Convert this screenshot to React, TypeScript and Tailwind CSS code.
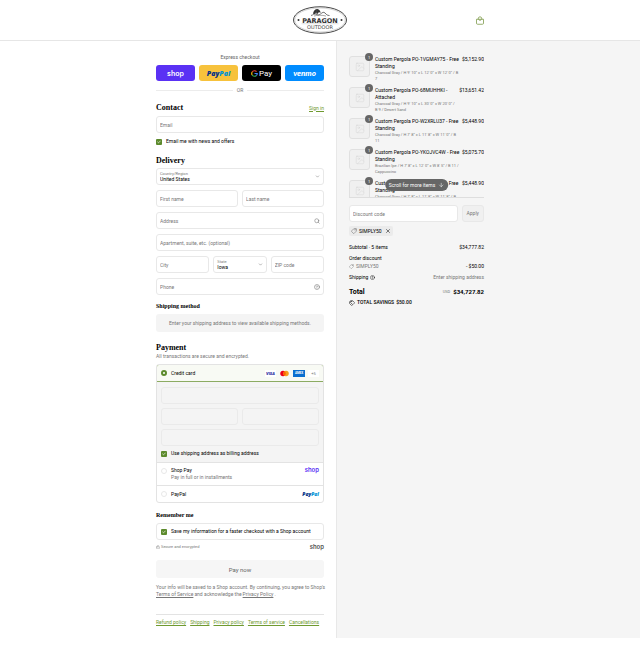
import type { ReactNode } from "react";
import { ArrowDown, Check, ChevronDown, CircleHelp, Image, Lock, Search, Tag, Tags, X } from "lucide-react";

const items = [
  { title: ["Custom Pergola PO-1VGMAY75 - Free", "Standing"], detail: ["Charcoal Gray / H 9' 10\" x L 12' 0\" x W 12' 0\" / B", "7"], price: "$5,152.90" },
  { title: ["Custom Pergola PO-68MUHHKI -", "Attached"], detail: ["Charcoal Gray / H 9' 10\" x L 30' 0\" x W 20' 0\" /", "B 9 / Desert Sand"], price: "$13,651.42" },
  { title: ["Custom Pergola PO-W2XRLU37 - Free", "Standing"], detail: ["Charcoal Gray / H 7' 8\" x L 11' 8\" x W 11' 0\" / B", "11"], price: "$5,448.90" },
  { title: ["Custom Pergola PO-YKOJVC4W - Free", "Standing"], detail: ["Brazilian Ipe / H 7' 8\" x L 12' 0\" x W 8' 5\" / B 11 /", "Cappuccino"], price: "$5,075.70" },
  { title: ["Custom Pergola PO-V8XKLM20 - Free", "Standing"], detail: ["Charcoal Gray / H 7' 8\" x L 11' 8\" x W 11' 8\" / B"], price: "$5,448.90" },
];

const policies = ["Refund policy", "Shipping", "Privacy policy", "Terms of service", "Cancellations"];

const field = "h-[17px] w-full min-w-0 rounded-[3px] border border-[#e8e8e8] bg-white px-[3px] text-[5px] text-black placeholder:text-[#777] outline-none";

function Heading({ children, small }: { children: ReactNode; small?: boolean }) {
  return (
    <h2 className={`font-["Liberation_Serif",serif] font-bold text-black ${small ? "text-[6px] leading-[8px]" : "text-[8px] leading-[10px]"}`}>
      {children}
    </h2>
  );
}

function TextField({ label, icon }: { label: string; icon?: ReactNode }) {
  return (
    <div className="relative min-w-0 flex-1">
      <input className={field} placeholder={label} aria-label={label} />
      {icon && <span className="absolute inset-y-0 right-1 flex items-center text-[#666]">{icon}</span>}
    </div>
  );
}

function SelectField({ id, label, value }: { id: string; label: string; value: string }) {
  return (
    <div className="relative min-w-0 flex-1">
      <label htmlFor={id} className="absolute left-1 top-[3px] text-[4px] leading-[5px] text-[#777]">{label}</label>
      <select id={id} className={`${field} appearance-none pt-[6px]`}>
        <option>{value}</option>
      </select>
      <span className="pointer-events-none absolute inset-y-0 right-1 flex items-center text-[#555]">
        <ChevronDown size={5} />
      </span>
    </div>
  );
}

function CheckField({ label }: { label: string }) {
  return (
    <label className="flex items-center gap-1 text-black">
      <span className="relative flex size-[6px] shrink-0">
        <input type="checkbox" defaultChecked className="size-[6px] appearance-none rounded-[1px] bg-[#5c8a2c]" />
        <Check size={4} strokeWidth={4} className="pointer-events-none absolute left-px top-px text-white" />
      </span>
      {label}
    </label>
  );
}

function ShopMark({ className }: { className: string }) {
  return <span className={`font-["Inter",sans-serif] font-semibold ${className}`}>shop</span>;
}

function PayPalMark({ className }: { className: string }) {
  return (
    <span className={`font-["Open_Sans",sans-serif] font-extrabold italic ${className}`}>
      <span className="text-[#003087]">Pay</span>
      <span className="text-[#0093d6]">Pal</span>
    </span>
  );
}

function GoogleG() {
  return (
    <svg viewBox="0 0 24 24" className="size-[7px]" fill="none" strokeWidth="4">
      <path d="M19 5.5A9.5 9.5 0 0 0 4 7" stroke="#ea4335" />
      <path d="M4 7a9.5 9.5 0 0 0 0 10" stroke="#fbbc04" />
      <path d="M4 17a9.5 9.5 0 0 0 14.500 2" stroke="#34a853" />
      <path d="M18.500 19a9.500 9.500 0 0 0 3-7H12" stroke="#4285f4" />
    </svg>
  );
}

function Logo() {
  return (
    <svg viewBox="0 0 108 56" className="h-[28px] w-[54px]" role="img" aria-label="Paragon Outdoor">
      <ellipse cx="54" cy="28" rx="53" ry="26.500" fill="white" stroke="#333" strokeWidth="1.800" />
      <ellipse cx="54" cy="28" rx="50.500" ry="24" fill="none" stroke="#777" strokeWidth="0.600" />
      <path d="M40 15c1-5 4-9 9-9 5 1 6 5 6 8l-3-2-3 4-3-3-3 4z" fill="#333" />
      <path d="M36 19c5-1 6-5 10-3s5 3 9 0 6-5 9-2 4 5 9 5" fill="none" stroke="#444" strokeWidth="1.500" />
      <path d="M48 8l-2 10M42 20c7-2 16-2 24 0" fill="none" stroke="#555" />
      <circle cx="11" cy="28" r="2" fill="#333" />
      <circle cx="97" cy="28" r="2" fill="#333" />
      <text x="54" y="33" textAnchor="middle" fontFamily="DejaVu Sans" fontWeight="bold" fontSize="13" fill="#333">PARAGON</text>
      <text x="54" y="46" textAnchor="middle" fontFamily="DejaVu Sans" fontSize="10" fill="#444">OUTDOOR</text>
      <path d="M17 35.500h74" stroke="#999" strokeWidth="0.600" />
    </svg>
  );
}

function CartIcon() {
  return (
    <svg viewBox="0 0 16 18" className="h-[9px] w-2" fill="none" stroke="#7d9b4a" strokeWidth="1.600" strokeLinejoin="round">
      <path d="M1 6.500h14v8q0 2-2 2H3q-2 0-2-2z" />
      <path d="M4 6.500q.500-5 4-5t4 5M5.500 6.500c0 3 5 3 5 0" />
    </svg>
  );
}

function Payment() {
  return (
    <div className="mt-1 overflow-hidden rounded-[3px] border border-[#e3e3e3]">
      <div className="-mx-px -mt-px flex h-[18px] items-center rounded-t-[3px] border border-[#8cab62] bg-[#f8faf4] px-1">
        <label className="flex flex-1 items-center gap-1">
          <input type="radio" name="method" defaultChecked className="size-[6px] appearance-none rounded-full border-2 border-[#5c8a2c] bg-white" />
          Credit card
        </label>
        <div className="flex items-center gap-[3px]">
          <span className="flex h-[7px] w-[11px] items-center justify-center bg-white text-[4px] font-black italic text-[#1a1f9c]">VISA</span>
          <svg viewBox="0 0 22 14" className="h-[7px] w-[11px]">
            <circle cx="8" cy="7" r="5.500" fill="#eb001b" />
            <circle cx="14" cy="7" r="5.500" fill="#f79e1b" />
            <path d="M11 2.400a5.500 5.500 0 0 1 0 9.200 5.500 5.500 0 0 1 0-9.200" fill="#ff5f00" />
          </svg>
          <span className="flex h-[7px] w-3 items-center justify-center bg-[#0b6fd0] text-[3px] font-bold text-white">AMEX</span>
          <span className="flex h-[7px] w-[11px] items-center justify-center bg-white text-[4px] text-[#777]">+5</span>
        </div>
      </div>
      <div className="flex flex-col gap-1 bg-[#f4f4f4] px-1 py-[5px]">
        <input aria-label="Card number" className="h-[17px] rounded-[3px] border border-[#eaeaea]" />
        <div className="flex gap-1">
          <input aria-label="Expiration date" className="h-[17px] min-w-0 flex-1 rounded-[3px] border border-[#eaeaea]" />
          <input aria-label="Security code" className="h-[17px] min-w-0 flex-1 rounded-[3px] border border-[#eaeaea]" />
        </div>
        <input aria-label="Name on card" className="h-[17px] rounded-[3px] border border-[#eaeaea]" />
        <CheckField label="Use shipping address as billing address" />
      </div>
      <div className="flex h-[23px] items-start border-t border-[#e3e3e3] px-1 pt-1">
        <label className="flex flex-1 items-start gap-1">
          <input type="radio" name="method" className="mt-px size-[6px] appearance-none rounded-full border border-[#e8e8e8] bg-white" />
          <span>
            Shop Pay
            <span className="block text-[#777]">Pay in full or in installments</span>
          </span>
        </label>
        <ShopMark className="text-[6px] leading-[6px] text-[#5a31f4]" />
      </div>
      <div className="flex h-[17px] items-center border-t border-[#e3e3e3] px-1">
        <label className="flex flex-1 items-center gap-1">
          <input type="radio" name="method" className="size-[6px] appearance-none rounded-full border border-[#e8e8e8] bg-white" />
          PayPal
        </label>
        <PayPalMark className="text-[5px]" />
      </div>
    </div>
  );
}

function Checkout() {
  const express = "flex h-4 min-w-0 flex-1 items-center justify-center rounded-[3px]";
  return (
    <main className="w-full max-w-[168px] pb-3 pt-3">
      <p className="text-center leading-[8px] text-[#666]">Express checkout</p>
      <div className="mt-1 flex gap-1">
        <button className={`${express} bg-[#5a31f4]`}><ShopMark className="text-[7px] text-white" /></button>
        <button className={`${express} bg-[#f7c23c]`}><PayPalMark className="text-[7px]" /></button>
        <button className={`${express} gap-px bg-black text-[8px] text-white`}><GoogleG />Pay</button>
        <button className={`${express} bg-[#008cff]`}>
          <span className='font-["Lato",sans-serif] text-[8px] font-black italic text-white'>venmo</span>
        </button>
      </div>
      <div className="mt-[6px] flex items-center gap-1 text-[#777]">
        <hr className="flex-1 border-[#ececec]" />OR<hr className="flex-1 border-[#ececec]" />
      </div>

      <div className="mt-[9px] flex items-center justify-between">
        <Heading>Contact</Heading>
        <a href="#signin" className="text-[#6f9a30] underline">Sign in</a>
      </div>
      <div className="mb-[5px] mt-[3px] flex"><TextField label="Email" /></div>
      <CheckField label="Email me with news and offers" />

      <div className="mt-[11px]"><Heading>Delivery</Heading></div>
      <div className="mt-[2px] flex flex-col gap-[5px]">
        <SelectField id="country" label="Country/Region" value="United States" />
        <div className="flex gap-1"><TextField label="First name" /><TextField label="Last name" /></div>
        <TextField label="Address" icon={<Search size={6} />} />
        <TextField label="Apartment, suite, etc. (optional)" />
        <div className="flex gap-1">
          <TextField label="City" />
          <SelectField id="state" label="State" value="Iowa" />
          <TextField label="ZIP code" />
        </div>
        <TextField label="Phone" icon={<CircleHelp size={6} />} />
      </div>

      <div className="mt-[7px]"><Heading small>Shipping method</Heading></div>
      <p className="mt-1 flex h-[18px] items-center justify-center rounded-[3px] bg-[#f4f4f4] text-[#777]">
        Enter your shipping address to view available shipping methods.
      </p>

      <div className="mt-[11px]"><Heading>Payment</Heading></div>
      <p className="text-[#777]">All transactions are secure and encrypted.</p>
      <Payment />

      <div className="mt-2"><Heading small>Remember me</Heading></div>
      <div className="mt-1 flex h-[17px] items-center rounded-[3px] border border-[#e8e8e8] px-1">
        <CheckField label="Save my information for a faster checkout with a Shop account" />
      </div>
      <div className="mt-[3px] flex items-center justify-between text-[4px] text-[#777]">
        <span className="flex items-center gap-px"><Lock size={4} />Secure and encrypted</span>
        <ShopMark className="text-[6px] text-[#555]" />
      </div>
      <button className="mt-[10px] h-[18px] w-full rounded-[3px] bg-[#f6f6f6] text-[6px] text-[#666]">Pay now</button>
      <div className="mt-[6px] whitespace-nowrap text-[#777]">
        <p>Your info will be saved to a Shop account. By continuing, you agree to Shop's</p>
        <p className="flex gap-px">
          <a href="#terms" className="underline">Terms of Service</a>
          <span>and acknowledge the</span>
          <a href="#privacy" className="underline">Privacy Policy</a>.
        </p>
      </div>
      <footer className="mt-4 flex gap-1 whitespace-nowrap border-t border-[#e3e3e3] pt-1 text-[#6f9a30]">
        {policies.map((name) => (
          <a key={name} href="#policy" className="underline">{name}</a>
        ))}
      </footer>
    </main>
  );
}

function Summary() {
  return (
    <aside className="w-full max-w-[135px] pt-[11px]">
      <div className="relative">
        <ul className="flex h-[146px] flex-col gap-[5px] overflow-hidden border-b border-[#dedede] pt-1">
          {items.map((item, i) => (
            <li key={i} className="flex shrink-0 items-start">
              <div className="relative mr-[5px] flex size-[21px] items-center justify-center rounded-[3px] border border-[#e0e0e0] bg-[#f0f0f0] text-[#d4d4d4]">
                <Image size={10} strokeWidth={1} />
                <span className="absolute -right-1 -top-[4px] flex size-2 items-center justify-center rounded-full bg-[#666] text-[4px] text-white">1</span>
              </div>
              <div className="flex-1 whitespace-nowrap">
                {item.title.map((line) => <p key={line}>{line}</p>)}
                {item.detail.map((line) => <p key={line} className="text-[4px] leading-[6px] text-[#777]">{line}</p>)}
              </div>
              <span>{item.price}</span>
            </li>
          ))}
        </ul>
        <button className="absolute bottom-[7px] left-1/2 flex h-3 -translate-x-1/2 items-center gap-[3px] whitespace-nowrap rounded-full bg-[#666] px-1 text-white">
          Scroll for more items <ArrowDown size={6} />
        </button>
      </div>

      <form className="mt-[7px] flex gap-1">
        <input className={field} placeholder="Discount code" aria-label="Discount code" />
        <button type="button" className="h-[17px] shrink-0 rounded-[3px] border border-[#e8e8e8] bg-[#f0f0f0] px-1 text-[#777]">Apply</button>
      </form>
      <div className="mt-1 flex">
        <span className="flex h-[10px] items-center gap-[2px] rounded-[2px] bg-[#ebebeb] px-[2px]">
          <Tag size={6} className="-scale-x-100 text-[#666]" />SIMPLY50
          <button aria-label="Remove SIMPLY50" className="ml-px"><X size={6} /></button>
        </span>
      </div>

      <dl className="mt-2">
        <div className="flex justify-between"><dt>Subtotal · 5 items</dt><dd>$34,777.82</dd></div>
        <div className="mt-1"><dt>Order discount</dt></div>
        <div className="mt-px flex justify-between">
          <dt className="flex items-center gap-[2px] text-[#777]"><Tag size={5} className="-scale-x-100" />SIMPLY50</dt>
          <dd>- $50.00</dd>
        </div>
        <div className="mt-1 flex justify-between">
          <dt className="flex items-center gap-[2px]">Shipping <CircleHelp size={5} /></dt>
          <dd className="text-[#777]">Enter shipping address</dd>
        </div>
        <div className="mt-[6px] flex items-center justify-between font-bold leading-[10px]">
          <dt className="text-[7px]">Total</dt>
          <dd className="flex items-center gap-[3px] text-[6px]"><span className="text-[4px] font-normal text-[#777]">USD</span>$34,727.82</dd>
        </div>
        <div className="mt-[2px] flex items-center gap-[2px] font-medium">
          <Tags size={6} />
          <dt>TOTAL SAVINGS</dt>
          <dd>$50.00</dd>
        </div>
      </dl>
    </aside>
  );
}

export default function App() {
  return (
    <div className='bg-white font-["Roboto",sans-serif] text-[5px] leading-[7px] text-black'>
      <header className="border-b border-[#e6e6e6]">
        <div className="mx-auto flex h-10 max-w-[328px] items-center justify-between">
          <span className="w-2" />
          <Logo />
          <a href="#cart" aria-label="Cart"><CartIcon /></a>
        </div>
      </header>
      <div className="grid grid-cols-[21fr_19fr]">
        <div className="flex min-w-0 justify-end pr-3"><Checkout /></div>
        <div className="border-l border-[#e8e8e8] bg-[#f5f5f5] pl-3"><Summary /></div>
      </div>
    </div>
  );
}
